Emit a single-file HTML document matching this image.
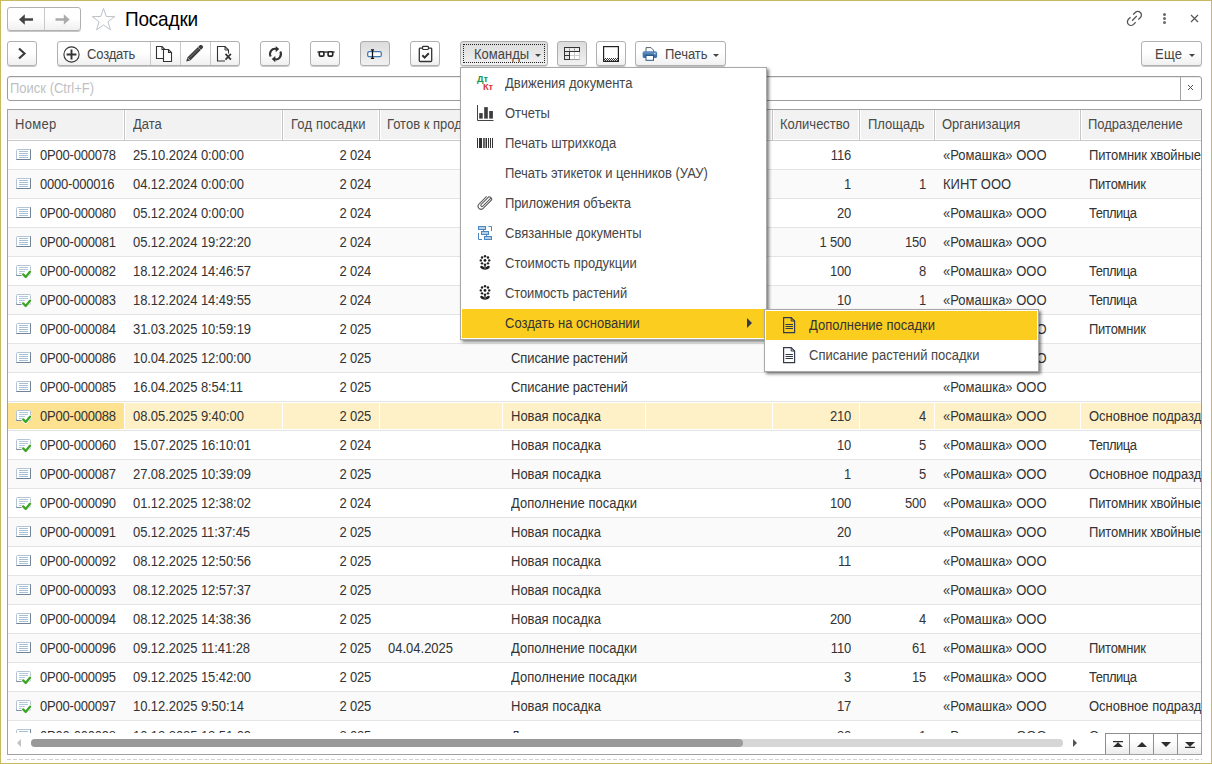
<!DOCTYPE html>
<html lang="ru">
<head>
<meta charset="utf-8">
<title>Посадки</title>
<style>
*{box-sizing:border-box;margin:0;padding:0}
html,body{width:1212px;height:764px;overflow:hidden;background:#fff}
body{font-family:"Liberation Sans",Arial,sans-serif;font-size:13px;color:#333;position:relative}
.frame{position:absolute;left:0;top:0;width:1212px;height:764px;border:1px solid #c9b95f;pointer-events:none;z-index:50}
.abs{position:absolute}
.btn{position:absolute;height:25px;border:1px solid #b0b0b0;border-radius:3px;background:linear-gradient(#fff 0%,#fff 45%,#f0f0f0 100%);box-shadow:0 1px 0 rgba(0,0,0,.22);white-space:nowrap;color:#444;font-size:13px;line-height:25px}
.btn.pressed{background:linear-gradient(#dcdcdc,#f1f1f1);border-color:#adadad;box-shadow:0 1px 0 rgba(0,0,0,.12)}
.btn svg{position:absolute}
.sep{position:absolute;top:0;width:1px;height:23px;background:#c9c9c9}
.title{position:absolute;left:125px;top:8px;font-size:19px;line-height:24px;color:#000;letter-spacing:-0.2px}
.caret{position:absolute;width:0;height:0;border-left:3.5px solid transparent;border-right:3.5px solid transparent;border-top:3.5px solid #444}
/* search */
.search{position:absolute;left:7px;top:76px;width:1195px;height:25px;border:1px solid #9c9c9c;border-radius:3px;background:#fff;box-shadow:inset 0 1px 0 rgba(0,0,0,.08)}
.search .ph{position:absolute;left:2px;top:0;line-height:23px;color:#bfbfc2;font-size:13px}
.search .clr{position:absolute;right:0;top:0;width:21px;height:23px;border-left:1px solid #a4a4a4;text-align:center;line-height:22px;color:#555;font-size:13px}
/* table */
.table{position:absolute;left:7px;top:109px;width:1195px;height:646px;border:1px solid #a0a0a0;background:#fff;overflow:hidden}
.thead{position:absolute;left:0;top:0;width:1193px;height:30px;background:#fff}
.thead .h{position:absolute;top:0;height:29px;line-height:30px;color:#4a4a4a;background:#f2f2f2;overflow:hidden;white-space:nowrap}
.thead .h span{position:absolute;top:0}
.hdiv{position:absolute;top:0;width:1px;height:30px;background:#c6c6c6}
.hline{position:absolute;left:0;top:30px;width:1193px;height:1px;background:#c9c9c9}
.tbody{position:absolute;left:0;top:0;width:1193px;height:623px;overflow:hidden}
.row{position:absolute;left:0;width:1193px;height:29px;border-bottom:1px solid #e4e4e4;background:#fff}
.row.alt{background:#fafafa}
.row .c{position:absolute;top:0;height:28px;line-height:30px;padding:0 8px;white-space:nowrap;overflow:hidden;color:#333}
.row .c.r{text-align:right;padding-right:8px;letter-spacing:-0.2px}
.row .c.first{padding-left:0}
.row .c.dt{letter-spacing:-0.07px}
.row .ri{position:absolute;left:8px;top:8px}
.row .num{position:absolute;left:32px;top:0;letter-spacing:-0.21px}
.row.sel{background:#fff}
.row.sel .c{background:#fff1c7;top:1px;height:26px;line-height:28px}
.row.sel .c.first{background:#fde292}
.row.sel .ri{top:7px}
/* vertical glyph stretch to mimic hinted rendering */
.row .tx{display:block;transform-origin:0 19px;transform:scaleY(1.08)}
.row .num{transform-origin:0 19px;transform:scaleY(1.08)}
.row.sel .tx,.row.sel .num{transform-origin:0 18px}
.row.last .tx,.row.last .num{transform:none}
.thead .h span{transform-origin:0 19px;transform:scaleY(1.08)}
.mi .t{transform-origin:0 19px;transform:scaleY(1.08)}
.btn span.abs{transform-origin:0 17px;transform:scaleY(1.08)}
.search .ph{transform-origin:0 16px;transform:scaleY(1.08)}
.title{transform-origin:0 18px;transform:scaleY(1.07)}
/* menu */
.menu{position:absolute;left:460px;top:67px;width:307px;height:273px;background:#fff;border:1px solid #a8a8a8;box-shadow:2px 2px 3px rgba(0,0,0,.5);z-index:10}
.mi{position:absolute;left:1px;margin-top:1px;width:303px;height:29px;line-height:29px;color:#464646}
.mi .t{position:absolute;left:43px;top:0}
.mi svg{position:absolute}
.mi.hl{background:#facd1f;color:#333}
.sub{position:absolute;left:764px;top:309px;width:275px;height:63px;background:#fff;border:1px solid #a8a8a8;box-shadow:2px 2px 3px rgba(0,0,0,.5);z-index:11}
.sub .mi{width:271px;left:1px;margin-top:1px}
.sub .mi .t{left:43px}
/* bottom */
.hscroll{position:absolute;left:0;top:623px;width:1193px;height:21px;background:#fff}
.navb{position:absolute;top:0;width:25px;height:22px;border:1px solid #8e8e8e;background:linear-gradient(#fff 35%,#ececec);}
.dash{position:absolute;left:7px;top:759px;width:1195px;height:1px;background:repeating-linear-gradient(90deg,#d0d0d0 0,#d0d0d0 4px,transparent 4px,transparent 6px)}
</style>
</head>
<body>
<!-- title bar -->
<div class="btn" style="left:7px;top:7px;width:74px;height:24px">
  <svg style="left:11px;top:6px" width="16" height="11" viewBox="0 0 16 11"><path d="M0 5.500L5.800 0.200V4.300H14V6.700H5.800V10.800z" fill="#444"/></svg>
  <div class="sep" style="left:36px;height:22px"></div>
  <svg style="left:46px;top:6px" width="16" height="11" viewBox="0 0 16 11"><path d="M15.600 5.500L9.800 0.200V4.300H1.500V6.700H9.800V10.800z" fill="#ababab"/></svg>
</div>
<svg class="abs" style="left:91px;top:7px" width="25" height="24" viewBox="0 0 25 24"><path d="M12.50 1.50L15.27 9.46L23.70 9.64L16.98 14.73L19.42 22.80L12.50 17.98L5.58 22.80L8.02 14.73L1.30 9.64L9.73 9.46z" fill="#fff" stroke="#b3bbc4" stroke-width="0.9" stroke-linejoin="miter"/></svg>
<div class="title">Посадки</div>
<!-- right icons -->
<svg class="abs" style="left:1125px;top:9px" width="19" height="19" viewBox="0 0 19 19"><g transform="translate(9.400 9.400) rotate(-45)" fill="none" stroke="#555" stroke-width="1.300" stroke-linecap="butt"><path d="M1.900 -3.600H4.800A3.600 3.600 0 0 1 4.800 3.600H1.900"/><path d="M-1.900 3.600H-4.800A3.600 3.600 0 0 1 -4.800 -3.600H-1.900"/><path d="M-3.300 0H3.300"/></g></svg>
<svg class="abs" style="left:1162px;top:12px" width="5" height="13" viewBox="0 0 5 13"><circle cx="2.500" cy="2.400" r="1.500" fill="#6a6a6a"/><circle cx="2.500" cy="6.500" r="1.500" fill="#6a6a6a"/><circle cx="2.500" cy="10.600" r="1.500" fill="#6a6a6a"/></svg>
<svg class="abs" style="left:1190px;top:14px" width="9" height="9" viewBox="0 0 9 9"><path d="M1 1l7 7M8 1l-7 7" stroke="#555" stroke-width="1.2" fill="none"/></svg>

<!-- toolbar -->
<div class="btn" style="left:7px;top:41px;width:30px">
  <svg style="left:9px;top:5px" width="10" height="13" viewBox="0 0 10 13"><path d="M2 1.5l5.5 5L2 11.5" fill="none" stroke="#3d3d3d" stroke-width="2.2"/></svg>
</div>
<div class="btn" style="left:57px;top:41px;width:183px">
  <svg style="left:5px;top:4px" width="17" height="17" viewBox="0 0 17 17"><circle cx="8.5" cy="8.5" r="7.6" fill="none" stroke="#333" stroke-width="1.1"/><path d="M8.5 3.6v9.8M3.6 8.5h9.8" stroke="#333" stroke-width="1.9"/></svg>
  <span class="abs" style="left:29px;top:0;letter-spacing:-0.17px">Создать</span>
  <div class="sep" style="left:92px"></div>
  <svg style="left:97px;top:3px" width="18" height="18" viewBox="0 0 18 18"><g fill="#fff" stroke="#333" stroke-width="1.1" stroke-linejoin="miter"><path d="M1.500 1.500h5.500l3 3v9h-8.500z"/><path d="M7 1.500v3h3" fill="none"/><path d="M8.500 4.500h5l3 3v9h-8z"/><path d="M13.500 4.500v3h3" fill="none"/></g></svg>
  <div class="sep" style="left:122px"></div>
  <svg style="left:127px;top:3px" width="19" height="18" viewBox="0 0 19 18"><path d="M1.200 16.600L2.300 12.500L14.500 0.400A2.100 2.100 0 0 1 17.500 3.300L5.300 15.500Z" fill="#3c3c3c"/><path d="M2.600 12.900l2.500 2.500" stroke="#ddd" stroke-width="0.800"/><path d="M13 2l3 3" stroke="#bbb" stroke-width="0.700"/><path d="M4.500 12.900L14 3.400" stroke="#8a8a8a" stroke-width="0.700"/></svg>
  <div class="sep" style="left:152px"></div>
  <svg style="left:158px;top:3px" width="18" height="18" viewBox="0 0 18 18"><path d="M12.500 8.500V5L9 1.500H1.500V16H9" fill="none" stroke="#333" stroke-width="1.100"/><path d="M9 1.500V5h3.500" fill="none" stroke="#333" stroke-width="1"/><path d="M9.500 8.800l5.400 5.800M14.900 8.800l-5.400 5.800" stroke="#333" stroke-width="1.700"/></svg>
</div>
<div class="btn" style="left:260px;top:41px;width:30px">
  <svg style="left:6px;top:3px" width="17" height="18" viewBox="0 0 17 18"><g fill="none" stroke="#333" stroke-width="2.100"><path d="M3.700 11.600A4.700 5.200 0 0 1 9.300 4.100"/><path d="M13.300 6.600A4.700 5.200 0 0 1 7.700 14.100"/></g><path d="M8.700 1l3.500 3.100-3.500 3.100z" fill="#333"/><path d="M8.300 11l-3.500 3.100 3.500 3.100z" fill="#333"/></svg>
</div>
<div class="btn" style="left:310px;top:41px;width:30px">
  <svg style="left:6px;top:8px" width="18" height="8" viewBox="0 0 18 8"><rect x="0.400" y="1.400" width="17.200" height="1.300" fill="#222"/><rect x="2.300" y="1.700" width="4.600" height="4.400" rx="1.200" fill="#fff" stroke="#222" stroke-width="1.600"/><rect x="11.100" y="1.700" width="4.600" height="4.400" rx="1.200" fill="#fff" stroke="#222" stroke-width="1.600"/></svg>
</div>
<div class="btn pressed" style="left:360px;top:41px;width:30px">
  <svg style="left:5px;top:6px" width="17" height="12" viewBox="0 0 17 12"><rect x="1.700" y="3.700" width="13.600" height="5" rx="1.500" fill="#fff" stroke="#3f78b2" stroke-width="1.300"/><path d="M4.900 1.800h3.200M6.500 1.800v8.600M4.900 10.400h3.200" stroke="#111" stroke-width="1.300" fill="none"/></svg>
</div>
<div class="btn" style="left:410px;top:41px;width:30px">
  <svg style="left:7px;top:3px" width="15" height="18" viewBox="0 0 15 18"><rect x="1.300" y="3.200" width="12.400" height="13.300" rx="0.800" fill="#fff" stroke="#333" stroke-width="1.300"/><rect x="4.600" y="1.300" width="5.800" height="3.200" rx="0.800" fill="#fff" stroke="#333" stroke-width="1.200"/><path d="M4.300 10.300l2.300 2.300 4.200-4.400" fill="none" stroke="#333" stroke-width="2"/></svg>
</div>
<div class="btn pressed" style="left:460px;top:41px;width:88px">
  <div class="abs" style="left:2px;top:2px;width:82px;height:19px;border:1px dotted #222"></div>
  <span class="abs" style="left:13px;top:0">Команды</span>
  <div class="caret" style="left:74px;top:12px"></div>
</div>
<div class="btn pressed" style="left:557px;top:41px;width:30px">
  <svg style="left:6px;top:5px" width="16" height="13" viewBox="0 0 16 13"><rect x="0" y="0" width="16" height="13" fill="#fff"/><path d="M10.500 4.500v8M5.500 8.500h10M15.500 4.500v8" stroke="#cdcdcd" stroke-width="1" fill="none"/><path d="M5.500 12.500h10" stroke="#9a9a9a" stroke-width="1" fill="none"/><rect x="0.500" y="0.500" width="15" height="4" fill="#ececec" stroke="#333" stroke-width="1"/><path d="M5.500 1.500v2M10.500 1.500v2" stroke="#8a8a8a" stroke-width="1"/><rect x="0.500" y="4.500" width="5" height="4" fill="#e4e4e4" stroke="#333" stroke-width="1"/><rect x="0.500" y="8.500" width="5" height="4" fill="#e4e4e4" stroke="#333" stroke-width="1"/></svg>
</div>
<div class="btn" style="left:596px;top:41px;width:30px">
  <svg style="left:6px;top:4px" width="17" height="17" viewBox="0 0 17 17"><defs><pattern id="chk" width="2" height="2" patternUnits="userSpaceOnUse"><rect width="1" height="1" fill="#333"/><rect x="1" y="1" width="1" height="1" fill="#333"/></pattern></defs><rect x="0.600" y="0.600" width="14.800" height="14.800" fill="#fff" stroke="#222" stroke-width="1.200"/><rect x="1" y="12" width="14" height="3" fill="url(#chk)"/></svg>
</div>
<div class="btn" style="left:635px;top:41px;width:91px">
  <svg style="left:6px;top:5px" width="16" height="14" viewBox="0 0 16 14"><path d="M4 5V0.600h5l2.500 2.500V5" fill="#fff" stroke="#55606c" stroke-width="1"/><rect x="0.700" y="4.600" width="14.400" height="6.400" rx="1.600" fill="#3f73aa"/><rect x="0.700" y="4.600" width="14.400" height="2.200" rx="1.200" fill="#5c8cc0"/><rect x="4" y="8.500" width="7.500" height="4.800" fill="#fff" stroke="#2f5582" stroke-width="1"/><rect x="12" y="6.300" width="1.600" height="1" fill="#e8f0f8"/></svg>
  <span class="abs" style="left:29px;top:0">Печать</span>
  <div class="caret" style="left:77px;top:12px"></div>
</div>
<div class="btn" style="left:1141px;top:41px;width:61px">
  <span class="abs" style="left:13px;top:0;letter-spacing:0.3px">Еще</span>
  <div class="caret" style="left:47px;top:12px"></div>
</div>

<!-- search -->
<div class="search"><span class="ph">Поиск (Ctrl+F)</span><div class="clr"><svg class="abs" style="left:6px;top:7px" width="7" height="7" viewBox="0 0 7 7"><path d="M1 1l5 5M6 1l-5 5" stroke="#4a4a4a" stroke-width="0.950" fill="none"/></svg></div></div>

<!-- table -->
<div class="table">
  <div class="tbody">
    <div class="thead">
<div class="h" style="left:0px;width:115px"><span style="left:7px;letter-spacing:0.3px">Номер</span></div>
<div class="hdiv" style="left:116px"></div>
<div class="h" style="left:118px;width:155px"><span style="left:7px;letter-spacing:0px">Дата</span></div>
<div class="hdiv" style="left:274px"></div>
<div class="h" style="left:276px;width:94px"><span style="left:7px;letter-spacing:0.17px">Год посадки</span></div>
<div class="hdiv" style="left:371px"></div>
<div class="h" style="left:373px;width:120px"><span style="left:6px;letter-spacing:0px">Готов к продаже</span></div>
<div class="hdiv" style="left:494px"></div>
<div class="h" style="left:496px;width:140px"><span style="left:7px;letter-spacing:0px">Вид операции</span></div>
<div class="hdiv" style="left:637px"></div>
<div class="h" style="left:639px;width:124px"><span style="left:7px;letter-spacing:0px">Комментарий</span></div>
<div class="hdiv" style="left:764px"></div>
<div class="h" style="left:766px;width:84px"><span style="left:6px;letter-spacing:0px">Количество</span></div>
<div class="hdiv" style="left:851px"></div>
<div class="h" style="left:853px;width:72px"><span style="left:7px;letter-spacing:0px">Площадь</span></div>
<div class="hdiv" style="left:926px"></div>
<div class="h" style="left:928px;width:143px"><span style="left:6px;letter-spacing:0px">Организация</span></div>
<div class="hdiv" style="left:1072px"></div>
<div class="h" style="left:1074px;width:120px"><span style="left:6px;letter-spacing:0px">Подразделение</span></div>
    </div>
    <div class="hline"></div>
<div class="row" style="top:31px">
<div class="c first" style="left:0px;width:116px"><svg class="ri" width="16" height="12" viewBox="0 0 16 12"><rect x="0.5" y="0.5" width="14" height="10" rx="1" fill="#fff" stroke="#b4c4d4"/><path d="M0.5 10v0.5h14v-10h-0.500" fill="none" stroke="#6f8499"/><path d="M3 2.500h9M3 4.500h9M3 6.500h9M3 8.500h9" stroke="#a9c0d4" stroke-width="1"/></svg><span class="num">0P00-000078</span></div>
<div class="c dt" style="left:117px;width:157px"><span class="tx">25.10.2024 0:00:00</span></div>
<div class="c r" style="left:275px;width:96px"><span class="tx">2 024</span></div>
<div class="c" style="left:372px;width:122px"></div>
<div class="c" style="left:495px;width:142px"></div>
<div class="c" style="left:638px;width:126px"></div>
<div class="c r" style="left:765px;width:86px"><span class="tx">116</span></div>
<div class="c r" style="left:852px;width:74px"></div>
<div class="c" style="left:927px;width:145px"><span class="tx">«Ромашка» ООО</span></div>
<div class="c" style="left:1073px;width:120px"><span class="tx" style="letter-spacing:-0.12px">Питомник хвойные</span></div>
</div>
<div class="row alt" style="top:60px">
<div class="c first" style="left:0px;width:116px"><svg class="ri" width="16" height="12" viewBox="0 0 16 12"><rect x="0.5" y="0.5" width="14" height="10" rx="1" fill="#fff" stroke="#b4c4d4"/><path d="M0.5 10v0.5h14v-10h-0.500" fill="none" stroke="#6f8499"/><path d="M3 2.500h9M3 4.500h9M3 6.500h9M3 8.500h9" stroke="#a9c0d4" stroke-width="1"/></svg><span class="num">0000-000016</span></div>
<div class="c dt" style="left:117px;width:157px"><span class="tx">04.12.2024 0:00:00</span></div>
<div class="c r" style="left:275px;width:96px"><span class="tx">2 024</span></div>
<div class="c" style="left:372px;width:122px"></div>
<div class="c" style="left:495px;width:142px"></div>
<div class="c" style="left:638px;width:126px"></div>
<div class="c r" style="left:765px;width:86px"><span class="tx">1</span></div>
<div class="c r" style="left:852px;width:74px"><span class="tx">1</span></div>
<div class="c" style="left:927px;width:145px"><span class="tx">КИНТ ООО</span></div>
<div class="c" style="left:1073px;width:120px"><span class="tx" style="letter-spacing:-0.26px">Питомник</span></div>
</div>
<div class="row" style="top:89px">
<div class="c first" style="left:0px;width:116px"><svg class="ri" width="16" height="12" viewBox="0 0 16 12"><rect x="0.5" y="0.5" width="14" height="10" rx="1" fill="#fff" stroke="#b4c4d4"/><path d="M0.5 10v0.5h14v-10h-0.500" fill="none" stroke="#6f8499"/><path d="M3 2.500h9M3 4.500h9M3 6.500h9M3 8.500h9" stroke="#a9c0d4" stroke-width="1"/></svg><span class="num">0P00-000080</span></div>
<div class="c dt" style="left:117px;width:157px"><span class="tx">05.12.2024 0:00:00</span></div>
<div class="c r" style="left:275px;width:96px"><span class="tx">2 024</span></div>
<div class="c" style="left:372px;width:122px"></div>
<div class="c" style="left:495px;width:142px"></div>
<div class="c" style="left:638px;width:126px"></div>
<div class="c r" style="left:765px;width:86px"><span class="tx">20</span></div>
<div class="c r" style="left:852px;width:74px"></div>
<div class="c" style="left:927px;width:145px"><span class="tx">«Ромашка» ООО</span></div>
<div class="c" style="left:1073px;width:120px"><span class="tx" style="letter-spacing:-0.5px">Теплица</span></div>
</div>
<div class="row alt" style="top:118px">
<div class="c first" style="left:0px;width:116px"><svg class="ri" width="16" height="12" viewBox="0 0 16 12"><rect x="0.5" y="0.5" width="14" height="10" rx="1" fill="#fff" stroke="#b4c4d4"/><path d="M0.5 10v0.5h14v-10h-0.500" fill="none" stroke="#6f8499"/><path d="M3 2.500h9M3 4.500h9M3 6.500h9M3 8.500h9" stroke="#a9c0d4" stroke-width="1"/></svg><span class="num">0P00-000081</span></div>
<div class="c dt" style="left:117px;width:157px"><span class="tx">05.12.2024 19:22:20</span></div>
<div class="c r" style="left:275px;width:96px"><span class="tx">2 024</span></div>
<div class="c" style="left:372px;width:122px"></div>
<div class="c" style="left:495px;width:142px"></div>
<div class="c" style="left:638px;width:126px"></div>
<div class="c r" style="left:765px;width:86px"><span class="tx">1 500</span></div>
<div class="c r" style="left:852px;width:74px"><span class="tx">150</span></div>
<div class="c" style="left:927px;width:145px"><span class="tx">«Ромашка» ООО</span></div>
<div class="c" style="left:1073px;width:120px"></div>
</div>
<div class="row" style="top:147px">
<div class="c first" style="left:0px;width:116px"><svg class="ri" width="17" height="14" viewBox="0 0 17 14"><rect x="0.5" y="0.5" width="14" height="10" rx="1" fill="#fff" stroke="#b4c4d4"/><path d="M0.5 9.500v1h7" fill="none" stroke="#7a8fa6"/><path d="M3 2.500h9M3 4.500h9M3 6.500h6M3 8.500h3" stroke="#b3c8da" stroke-width="1"/><path d="M6.500 8.500l10 0v5h-10z" fill="#fff" opacity="0"/><path d="M7.200 9.400l2.500 2.600 4.300-5.300" fill="none" stroke="#fff" stroke-width="3.600" stroke-linecap="round" stroke-linejoin="round"/><path d="M7.200 9.400l2.500 2.600 4.300-5.300" fill="none" stroke="#3da526" stroke-width="2.300" stroke-linecap="round" stroke-linejoin="round"/></svg><span class="num">0P00-000082</span></div>
<div class="c dt" style="left:117px;width:157px"><span class="tx">18.12.2024 14:46:57</span></div>
<div class="c r" style="left:275px;width:96px"><span class="tx">2 024</span></div>
<div class="c" style="left:372px;width:122px"></div>
<div class="c" style="left:495px;width:142px"></div>
<div class="c" style="left:638px;width:126px"></div>
<div class="c r" style="left:765px;width:86px"><span class="tx">100</span></div>
<div class="c r" style="left:852px;width:74px"><span class="tx">8</span></div>
<div class="c" style="left:927px;width:145px"><span class="tx">«Ромашка» ООО</span></div>
<div class="c" style="left:1073px;width:120px"><span class="tx" style="letter-spacing:-0.5px">Теплица</span></div>
</div>
<div class="row alt" style="top:176px">
<div class="c first" style="left:0px;width:116px"><svg class="ri" width="17" height="14" viewBox="0 0 17 14"><rect x="0.5" y="0.5" width="14" height="10" rx="1" fill="#fff" stroke="#b4c4d4"/><path d="M0.5 9.500v1h7" fill="none" stroke="#7a8fa6"/><path d="M3 2.500h9M3 4.500h9M3 6.500h6M3 8.500h3" stroke="#b3c8da" stroke-width="1"/><path d="M6.500 8.500l10 0v5h-10z" fill="#fff" opacity="0"/><path d="M7.200 9.400l2.500 2.600 4.300-5.300" fill="none" stroke="#fff" stroke-width="3.600" stroke-linecap="round" stroke-linejoin="round"/><path d="M7.200 9.400l2.500 2.600 4.300-5.300" fill="none" stroke="#3da526" stroke-width="2.300" stroke-linecap="round" stroke-linejoin="round"/></svg><span class="num">0P00-000083</span></div>
<div class="c dt" style="left:117px;width:157px"><span class="tx">18.12.2024 14:49:55</span></div>
<div class="c r" style="left:275px;width:96px"><span class="tx">2 024</span></div>
<div class="c" style="left:372px;width:122px"></div>
<div class="c" style="left:495px;width:142px"></div>
<div class="c" style="left:638px;width:126px"></div>
<div class="c r" style="left:765px;width:86px"><span class="tx">10</span></div>
<div class="c r" style="left:852px;width:74px"><span class="tx">1</span></div>
<div class="c" style="left:927px;width:145px"><span class="tx">«Ромашка» ООО</span></div>
<div class="c" style="left:1073px;width:120px"><span class="tx" style="letter-spacing:-0.5px">Теплица</span></div>
</div>
<div class="row" style="top:205px">
<div class="c first" style="left:0px;width:116px"><svg class="ri" width="16" height="12" viewBox="0 0 16 12"><rect x="0.5" y="0.5" width="14" height="10" rx="1" fill="#fff" stroke="#b4c4d4"/><path d="M0.5 10v0.5h14v-10h-0.500" fill="none" stroke="#6f8499"/><path d="M3 2.500h9M3 4.500h9M3 6.500h9M3 8.500h9" stroke="#a9c0d4" stroke-width="1"/></svg><span class="num">0P00-000084</span></div>
<div class="c dt" style="left:117px;width:157px"><span class="tx">31.03.2025 10:59:19</span></div>
<div class="c r" style="left:275px;width:96px"><span class="tx">2 025</span></div>
<div class="c" style="left:372px;width:122px"></div>
<div class="c" style="left:495px;width:142px"><span class="tx">Новая посадка</span></div>
<div class="c" style="left:638px;width:126px"></div>
<div class="c r" style="left:765px;width:86px"><span class="tx">50</span></div>
<div class="c r" style="left:852px;width:74px"><span class="tx">2</span></div>
<div class="c" style="left:927px;width:145px"><span class="tx">«Ромашка» ООО</span></div>
<div class="c" style="left:1073px;width:120px"><span class="tx" style="letter-spacing:-0.26px">Питомник</span></div>
</div>
<div class="row alt" style="top:234px">
<div class="c first" style="left:0px;width:116px"><svg class="ri" width="16" height="12" viewBox="0 0 16 12"><rect x="0.5" y="0.5" width="14" height="10" rx="1" fill="#fff" stroke="#b4c4d4"/><path d="M0.5 10v0.5h14v-10h-0.500" fill="none" stroke="#6f8499"/><path d="M3 2.500h9M3 4.500h9M3 6.500h9M3 8.500h9" stroke="#a9c0d4" stroke-width="1"/></svg><span class="num">0P00-000086</span></div>
<div class="c dt" style="left:117px;width:157px"><span class="tx">10.04.2025 12:00:00</span></div>
<div class="c r" style="left:275px;width:96px"><span class="tx">2 025</span></div>
<div class="c" style="left:372px;width:122px"></div>
<div class="c" style="left:495px;width:142px"><span class="tx" style="letter-spacing:-0.1px">Списание растений</span></div>
<div class="c" style="left:638px;width:126px"></div>
<div class="c r" style="left:765px;width:86px"></div>
<div class="c r" style="left:852px;width:74px"></div>
<div class="c" style="left:927px;width:145px"><span class="tx">«Ромашка» ООО</span></div>
<div class="c" style="left:1073px;width:120px"></div>
</div>
<div class="row" style="top:263px">
<div class="c first" style="left:0px;width:116px"><svg class="ri" width="16" height="12" viewBox="0 0 16 12"><rect x="0.5" y="0.5" width="14" height="10" rx="1" fill="#fff" stroke="#b4c4d4"/><path d="M0.5 10v0.5h14v-10h-0.500" fill="none" stroke="#6f8499"/><path d="M3 2.500h9M3 4.500h9M3 6.500h9M3 8.500h9" stroke="#a9c0d4" stroke-width="1"/></svg><span class="num">0P00-000085</span></div>
<div class="c dt" style="left:117px;width:157px"><span class="tx">16.04.2025 8:54:11</span></div>
<div class="c r" style="left:275px;width:96px"><span class="tx">2 025</span></div>
<div class="c" style="left:372px;width:122px"></div>
<div class="c" style="left:495px;width:142px"><span class="tx" style="letter-spacing:-0.1px">Списание растений</span></div>
<div class="c" style="left:638px;width:126px"></div>
<div class="c r" style="left:765px;width:86px"></div>
<div class="c r" style="left:852px;width:74px"></div>
<div class="c" style="left:927px;width:145px"><span class="tx">«Ромашка» ООО</span></div>
<div class="c" style="left:1073px;width:120px"></div>
</div>
<div class="row alt sel" style="top:292px">
<div class="c first" style="left:0px;width:116px"><svg class="ri" width="17" height="14" viewBox="0 0 17 14"><rect x="0.5" y="0.5" width="14" height="10" rx="1" fill="#fff" stroke="#b4c4d4"/><path d="M0.5 9.500v1h7" fill="none" stroke="#7a8fa6"/><path d="M3 2.500h9M3 4.500h9M3 6.500h6M3 8.500h3" stroke="#b3c8da" stroke-width="1"/><path d="M6.500 8.500l10 0v5h-10z" fill="#fff" opacity="0"/><path d="M7.200 9.400l2.500 2.600 4.300-5.300" fill="none" stroke="#fff" stroke-width="3.600" stroke-linecap="round" stroke-linejoin="round"/><path d="M7.200 9.400l2.500 2.600 4.300-5.300" fill="none" stroke="#3da526" stroke-width="2.300" stroke-linecap="round" stroke-linejoin="round"/></svg><span class="num">0P00-000088</span></div>
<div class="c dt" style="left:117px;width:157px"><span class="tx">08.05.2025 9:40:00</span></div>
<div class="c r" style="left:275px;width:96px"><span class="tx">2 025</span></div>
<div class="c" style="left:372px;width:122px"></div>
<div class="c" style="left:495px;width:142px"><span class="tx">Новая посадка</span></div>
<div class="c" style="left:638px;width:126px"></div>
<div class="c r" style="left:765px;width:86px"><span class="tx">210</span></div>
<div class="c r" style="left:852px;width:74px"><span class="tx">4</span></div>
<div class="c" style="left:927px;width:145px"><span class="tx">«Ромашка» ООО</span></div>
<div class="c" style="left:1073px;width:120px"><span class="tx">Основное подразделение</span></div>
</div>
<div class="row" style="top:321px">
<div class="c first" style="left:0px;width:116px"><svg class="ri" width="17" height="14" viewBox="0 0 17 14"><rect x="0.5" y="0.5" width="14" height="10" rx="1" fill="#fff" stroke="#b4c4d4"/><path d="M0.5 9.500v1h7" fill="none" stroke="#7a8fa6"/><path d="M3 2.500h9M3 4.500h9M3 6.500h6M3 8.500h3" stroke="#b3c8da" stroke-width="1"/><path d="M6.500 8.500l10 0v5h-10z" fill="#fff" opacity="0"/><path d="M7.200 9.400l2.500 2.600 4.300-5.300" fill="none" stroke="#fff" stroke-width="3.600" stroke-linecap="round" stroke-linejoin="round"/><path d="M7.200 9.400l2.500 2.600 4.300-5.300" fill="none" stroke="#3da526" stroke-width="2.300" stroke-linecap="round" stroke-linejoin="round"/></svg><span class="num">0P00-000060</span></div>
<div class="c dt" style="left:117px;width:157px"><span class="tx">15.07.2025 16:10:01</span></div>
<div class="c r" style="left:275px;width:96px"><span class="tx">2 024</span></div>
<div class="c" style="left:372px;width:122px"></div>
<div class="c" style="left:495px;width:142px"><span class="tx">Новая посадка</span></div>
<div class="c" style="left:638px;width:126px"></div>
<div class="c r" style="left:765px;width:86px"><span class="tx">10</span></div>
<div class="c r" style="left:852px;width:74px"><span class="tx">5</span></div>
<div class="c" style="left:927px;width:145px"><span class="tx">«Ромашка» ООО</span></div>
<div class="c" style="left:1073px;width:120px"><span class="tx" style="letter-spacing:-0.5px">Теплица</span></div>
</div>
<div class="row alt" style="top:350px">
<div class="c first" style="left:0px;width:116px"><svg class="ri" width="16" height="12" viewBox="0 0 16 12"><rect x="0.5" y="0.5" width="14" height="10" rx="1" fill="#fff" stroke="#b4c4d4"/><path d="M0.5 10v0.5h14v-10h-0.500" fill="none" stroke="#6f8499"/><path d="M3 2.500h9M3 4.500h9M3 6.500h9M3 8.500h9" stroke="#a9c0d4" stroke-width="1"/></svg><span class="num">0P00-000087</span></div>
<div class="c dt" style="left:117px;width:157px"><span class="tx">27.08.2025 10:39:09</span></div>
<div class="c r" style="left:275px;width:96px"><span class="tx">2 025</span></div>
<div class="c" style="left:372px;width:122px"></div>
<div class="c" style="left:495px;width:142px"><span class="tx">Новая посадка</span></div>
<div class="c" style="left:638px;width:126px"></div>
<div class="c r" style="left:765px;width:86px"><span class="tx">1</span></div>
<div class="c r" style="left:852px;width:74px"><span class="tx">5</span></div>
<div class="c" style="left:927px;width:145px"><span class="tx">«Ромашка» ООО</span></div>
<div class="c" style="left:1073px;width:120px"><span class="tx">Основное подразделение</span></div>
</div>
<div class="row" style="top:379px">
<div class="c first" style="left:0px;width:116px"><svg class="ri" width="17" height="14" viewBox="0 0 17 14"><rect x="0.5" y="0.5" width="14" height="10" rx="1" fill="#fff" stroke="#b4c4d4"/><path d="M0.5 9.500v1h7" fill="none" stroke="#7a8fa6"/><path d="M3 2.500h9M3 4.500h9M3 6.500h6M3 8.500h3" stroke="#b3c8da" stroke-width="1"/><path d="M6.500 8.500l10 0v5h-10z" fill="#fff" opacity="0"/><path d="M7.200 9.400l2.500 2.600 4.300-5.300" fill="none" stroke="#fff" stroke-width="3.600" stroke-linecap="round" stroke-linejoin="round"/><path d="M7.200 9.400l2.500 2.600 4.300-5.300" fill="none" stroke="#3da526" stroke-width="2.300" stroke-linecap="round" stroke-linejoin="round"/></svg><span class="num">0P00-000090</span></div>
<div class="c dt" style="left:117px;width:157px"><span class="tx">01.12.2025 12:38:02</span></div>
<div class="c r" style="left:275px;width:96px"><span class="tx">2 024</span></div>
<div class="c" style="left:372px;width:122px"></div>
<div class="c" style="left:495px;width:142px"><span class="tx">Дополнение посадки</span></div>
<div class="c" style="left:638px;width:126px"></div>
<div class="c r" style="left:765px;width:86px"><span class="tx">100</span></div>
<div class="c r" style="left:852px;width:74px"><span class="tx">500</span></div>
<div class="c" style="left:927px;width:145px"><span class="tx">«Ромашка» ООО</span></div>
<div class="c" style="left:1073px;width:120px"><span class="tx" style="letter-spacing:-0.12px">Питомник хвойные</span></div>
</div>
<div class="row alt" style="top:408px">
<div class="c first" style="left:0px;width:116px"><svg class="ri" width="16" height="12" viewBox="0 0 16 12"><rect x="0.5" y="0.5" width="14" height="10" rx="1" fill="#fff" stroke="#b4c4d4"/><path d="M0.5 10v0.5h14v-10h-0.500" fill="none" stroke="#6f8499"/><path d="M3 2.500h9M3 4.500h9M3 6.500h9M3 8.500h9" stroke="#a9c0d4" stroke-width="1"/></svg><span class="num">0P00-000091</span></div>
<div class="c dt" style="left:117px;width:157px"><span class="tx">05.12.2025 11:37:45</span></div>
<div class="c r" style="left:275px;width:96px"><span class="tx">2 025</span></div>
<div class="c" style="left:372px;width:122px"></div>
<div class="c" style="left:495px;width:142px"><span class="tx">Новая посадка</span></div>
<div class="c" style="left:638px;width:126px"></div>
<div class="c r" style="left:765px;width:86px"><span class="tx">20</span></div>
<div class="c r" style="left:852px;width:74px"></div>
<div class="c" style="left:927px;width:145px"><span class="tx">«Ромашка» ООО</span></div>
<div class="c" style="left:1073px;width:120px"><span class="tx" style="letter-spacing:-0.12px">Питомник хвойные</span></div>
</div>
<div class="row" style="top:437px">
<div class="c first" style="left:0px;width:116px"><svg class="ri" width="16" height="12" viewBox="0 0 16 12"><rect x="0.5" y="0.5" width="14" height="10" rx="1" fill="#fff" stroke="#b4c4d4"/><path d="M0.5 10v0.5h14v-10h-0.500" fill="none" stroke="#6f8499"/><path d="M3 2.500h9M3 4.500h9M3 6.500h9M3 8.500h9" stroke="#a9c0d4" stroke-width="1"/></svg><span class="num">0P00-000092</span></div>
<div class="c dt" style="left:117px;width:157px"><span class="tx">08.12.2025 12:50:56</span></div>
<div class="c r" style="left:275px;width:96px"><span class="tx">2 025</span></div>
<div class="c" style="left:372px;width:122px"></div>
<div class="c" style="left:495px;width:142px"><span class="tx">Новая посадка</span></div>
<div class="c" style="left:638px;width:126px"></div>
<div class="c r" style="left:765px;width:86px"><span class="tx">11</span></div>
<div class="c r" style="left:852px;width:74px"></div>
<div class="c" style="left:927px;width:145px"><span class="tx">«Ромашка» ООО</span></div>
<div class="c" style="left:1073px;width:120px"></div>
</div>
<div class="row alt" style="top:466px">
<div class="c first" style="left:0px;width:116px"><svg class="ri" width="16" height="12" viewBox="0 0 16 12"><rect x="0.5" y="0.5" width="14" height="10" rx="1" fill="#fff" stroke="#b4c4d4"/><path d="M0.5 10v0.5h14v-10h-0.500" fill="none" stroke="#6f8499"/><path d="M3 2.500h9M3 4.500h9M3 6.500h9M3 8.500h9" stroke="#a9c0d4" stroke-width="1"/></svg><span class="num">0P00-000093</span></div>
<div class="c dt" style="left:117px;width:157px"><span class="tx">08.12.2025 12:57:37</span></div>
<div class="c r" style="left:275px;width:96px"><span class="tx">2 025</span></div>
<div class="c" style="left:372px;width:122px"></div>
<div class="c" style="left:495px;width:142px"><span class="tx">Новая посадка</span></div>
<div class="c" style="left:638px;width:126px"></div>
<div class="c r" style="left:765px;width:86px"></div>
<div class="c r" style="left:852px;width:74px"></div>
<div class="c" style="left:927px;width:145px"><span class="tx">«Ромашка» ООО</span></div>
<div class="c" style="left:1073px;width:120px"></div>
</div>
<div class="row" style="top:495px">
<div class="c first" style="left:0px;width:116px"><svg class="ri" width="16" height="12" viewBox="0 0 16 12"><rect x="0.5" y="0.5" width="14" height="10" rx="1" fill="#fff" stroke="#b4c4d4"/><path d="M0.5 10v0.5h14v-10h-0.500" fill="none" stroke="#6f8499"/><path d="M3 2.500h9M3 4.500h9M3 6.500h9M3 8.500h9" stroke="#a9c0d4" stroke-width="1"/></svg><span class="num">0P00-000094</span></div>
<div class="c dt" style="left:117px;width:157px"><span class="tx">08.12.2025 14:38:36</span></div>
<div class="c r" style="left:275px;width:96px"><span class="tx">2 025</span></div>
<div class="c" style="left:372px;width:122px"></div>
<div class="c" style="left:495px;width:142px"><span class="tx">Новая посадка</span></div>
<div class="c" style="left:638px;width:126px"></div>
<div class="c r" style="left:765px;width:86px"><span class="tx">200</span></div>
<div class="c r" style="left:852px;width:74px"><span class="tx">4</span></div>
<div class="c" style="left:927px;width:145px"><span class="tx">«Ромашка» ООО</span></div>
<div class="c" style="left:1073px;width:120px"></div>
</div>
<div class="row alt" style="top:524px">
<div class="c first" style="left:0px;width:116px"><svg class="ri" width="16" height="12" viewBox="0 0 16 12"><rect x="0.5" y="0.5" width="14" height="10" rx="1" fill="#fff" stroke="#b4c4d4"/><path d="M0.5 10v0.5h14v-10h-0.500" fill="none" stroke="#6f8499"/><path d="M3 2.500h9M3 4.500h9M3 6.500h9M3 8.500h9" stroke="#a9c0d4" stroke-width="1"/></svg><span class="num">0P00-000096</span></div>
<div class="c dt" style="left:117px;width:157px"><span class="tx">09.12.2025 11:41:28</span></div>
<div class="c r" style="left:275px;width:96px"><span class="tx">2 025</span></div>
<div class="c" style="left:372px;width:122px"><span class="tx">04.04.2025</span></div>
<div class="c" style="left:495px;width:142px"><span class="tx">Дополнение посадки</span></div>
<div class="c" style="left:638px;width:126px"></div>
<div class="c r" style="left:765px;width:86px"><span class="tx">110</span></div>
<div class="c r" style="left:852px;width:74px"><span class="tx">61</span></div>
<div class="c" style="left:927px;width:145px"><span class="tx">«Ромашка» ООО</span></div>
<div class="c" style="left:1073px;width:120px"><span class="tx" style="letter-spacing:-0.26px">Питомник</span></div>
</div>
<div class="row" style="top:553px">
<div class="c first" style="left:0px;width:116px"><svg class="ri" width="17" height="14" viewBox="0 0 17 14"><rect x="0.5" y="0.5" width="14" height="10" rx="1" fill="#fff" stroke="#b4c4d4"/><path d="M0.5 9.500v1h7" fill="none" stroke="#7a8fa6"/><path d="M3 2.500h9M3 4.500h9M3 6.500h6M3 8.500h3" stroke="#b3c8da" stroke-width="1"/><path d="M6.500 8.500l10 0v5h-10z" fill="#fff" opacity="0"/><path d="M7.200 9.400l2.500 2.600 4.300-5.300" fill="none" stroke="#fff" stroke-width="3.600" stroke-linecap="round" stroke-linejoin="round"/><path d="M7.200 9.400l2.500 2.600 4.300-5.300" fill="none" stroke="#3da526" stroke-width="2.300" stroke-linecap="round" stroke-linejoin="round"/></svg><span class="num">0P00-000095</span></div>
<div class="c dt" style="left:117px;width:157px"><span class="tx">09.12.2025 15:42:00</span></div>
<div class="c r" style="left:275px;width:96px"><span class="tx">2 025</span></div>
<div class="c" style="left:372px;width:122px"></div>
<div class="c" style="left:495px;width:142px"><span class="tx">Дополнение посадки</span></div>
<div class="c" style="left:638px;width:126px"></div>
<div class="c r" style="left:765px;width:86px"><span class="tx">3</span></div>
<div class="c r" style="left:852px;width:74px"><span class="tx">15</span></div>
<div class="c" style="left:927px;width:145px"><span class="tx">«Ромашка» ООО</span></div>
<div class="c" style="left:1073px;width:120px"><span class="tx" style="letter-spacing:-0.5px">Теплица</span></div>
</div>
<div class="row alt" style="top:582px">
<div class="c first" style="left:0px;width:116px"><svg class="ri" width="17" height="14" viewBox="0 0 17 14"><rect x="0.5" y="0.5" width="14" height="10" rx="1" fill="#fff" stroke="#b4c4d4"/><path d="M0.5 9.500v1h7" fill="none" stroke="#7a8fa6"/><path d="M3 2.500h9M3 4.500h9M3 6.500h6M3 8.500h3" stroke="#b3c8da" stroke-width="1"/><path d="M6.500 8.500l10 0v5h-10z" fill="#fff" opacity="0"/><path d="M7.200 9.400l2.500 2.600 4.300-5.300" fill="none" stroke="#fff" stroke-width="3.600" stroke-linecap="round" stroke-linejoin="round"/><path d="M7.200 9.400l2.500 2.600 4.300-5.300" fill="none" stroke="#3da526" stroke-width="2.300" stroke-linecap="round" stroke-linejoin="round"/></svg><span class="num">0P00-000097</span></div>
<div class="c dt" style="left:117px;width:157px"><span class="tx">10.12.2025 9:50:14</span></div>
<div class="c r" style="left:275px;width:96px"><span class="tx">2 025</span></div>
<div class="c" style="left:372px;width:122px"></div>
<div class="c" style="left:495px;width:142px"><span class="tx">Новая посадка</span></div>
<div class="c" style="left:638px;width:126px"></div>
<div class="c r" style="left:765px;width:86px"><span class="tx">17</span></div>
<div class="c r" style="left:852px;width:74px"></div>
<div class="c" style="left:927px;width:145px"><span class="tx">«Ромашка» ООО</span></div>
<div class="c" style="left:1073px;width:120px"><span class="tx">Основное подразделение</span></div>
</div>
<div class="row last" style="top:611px">
<div class="c first" style="left:0px;width:116px"><svg class="ri" width="16" height="12" viewBox="0 0 16 12"><rect x="0.5" y="0.5" width="14" height="10" rx="1" fill="#fff" stroke="#b4c4d4"/><path d="M0.5 10v0.5h14v-10h-0.500" fill="none" stroke="#6f8499"/><path d="M3 2.500h9M3 4.500h9M3 6.500h9M3 8.500h9" stroke="#a9c0d4" stroke-width="1"/></svg><span class="num">0P00-000098</span></div>
<div class="c dt" style="left:117px;width:157px"><span class="tx">10.12.2025 12:51:09</span></div>
<div class="c r" style="left:275px;width:96px"><span class="tx">2 025</span></div>
<div class="c" style="left:372px;width:122px"></div>
<div class="c" style="left:495px;width:142px"><span class="tx">Дополнение посадки</span></div>
<div class="c" style="left:638px;width:126px"></div>
<div class="c r" style="left:765px;width:86px"><span class="tx">30</span></div>
<div class="c r" style="left:852px;width:74px"><span class="tx">1</span></div>
<div class="c" style="left:927px;width:145px"><span class="tx">«Ромашка» ООО</span></div>
<div class="c" style="left:1073px;width:120px"><span class="tx">Основное подразделение</span></div>
</div>
  </div>
  <div class="hscroll">
    <div class="abs" style="left:9px;top:6px;width:0;height:0;border-top:4px solid transparent;border-bottom:4px solid transparent;border-right:4px solid #c2c2c2"></div>
    <div class="abs" style="left:23px;top:6px;width:1032px;height:8px;border-radius:4px;background:#d6d6d6"></div>
    <div class="abs" style="left:23px;top:6px;width:712px;height:8px;border-radius:4px;background:#999"></div>
    <div class="abs" style="left:1065px;top:6px;width:0;height:0;border-top:4px solid transparent;border-bottom:4px solid transparent;border-left:4px solid #555"></div>
    <div class="navb" style="left:1097px"><svg class="abs" style="left:7px;top:7px" width="10" height="6" viewBox="0 0 10 6"><path d="M0 0h10v1.300H0zM5 1.300L10 6H0z" fill="#2e2e2e"/></svg></div>
    <div class="navb" style="left:1121px"><svg class="abs" style="left:7px;top:8px" width="10" height="5" viewBox="0 0 10 5"><path d="M5 0l5 5H0z" fill="#2e2e2e"/></svg></div>
    <div class="navb" style="left:1145px"><svg class="abs" style="left:7px;top:8px" width="10" height="5" viewBox="0 0 10 5"><path d="M5 5l5-5H0z" fill="#2e2e2e"/></svg></div>
    <div class="navb" style="left:1169px"><svg class="abs" style="left:7px;top:8px" width="10" height="6" viewBox="0 0 10 6"><path d="M0 4.700h10V6H0zM5 4.700L10 0H0z" fill="#2e2e2e"/></svg></div>
  </div>
</div>
<div class="dash"></div>

<!-- dropdown menu -->
<div class="menu">
  <div class="mi" style="top:0"><svg style="left:14px;top:6px" width="20" height="18" viewBox="0 0 20 18"><text x="0.900" y="7" font-family="Liberation Sans, sans-serif" font-size="8.600" font-weight="bold" fill="#0f9648" textLength="11" lengthAdjust="spacingAndGlyphs">Дт</text><text x="6.900" y="15" font-family="Liberation Sans, sans-serif" font-size="8.600" font-weight="bold" fill="#db373f" textLength="10.300" lengthAdjust="spacingAndGlyphs">Кт</text></svg><span class="t">Движения документа</span></div>
  <div class="mi" style="top:30px"><svg style="left:15px;top:6px" width="17" height="16" viewBox="0 0 17 16"><path d="M0.500 0v15.500H16.500" fill="none" stroke="#444" stroke-width="1"/><rect x="2.200" y="8.100" width="3.500" height="5.500" fill="#3d3d3d"/><rect x="7.200" y="2.100" width="3.600" height="11.500" fill="#3d3d3d"/><rect x="12.200" y="6" width="3.700" height="7.600" fill="#3d3d3d"/></svg><span class="t">Отчеты</span></div>
  <div class="mi" style="top:60px"><svg style="left:14px;top:9px" width="18" height="10" viewBox="0 0 18 10"><path d="M1 0h1v10h-1zM3 0h3v10h-3zM7.200 0h1.500v10h-1.500zM9.500 0h1.500v10h-1.500zM12 0h1v10h-1zM14 0h1v10h-1zM16 0h1v10h-1z" fill="#333"/></svg><span class="t">Печать штрихкода</span></div>
  <div class="mi" style="top:90px"><span class="t" style="letter-spacing:-0.03px">Печать этикеток и ценников (УАУ)</span></div>
  <div class="mi" style="top:120px"><svg style="left:14px;top:5px" width="18" height="18" viewBox="0 0 18 18"><g transform="translate(9.400 7.900) rotate(-45) scale(0.930) translate(-9.800 -3.200)" fill="none" stroke="#5c5c5c" stroke-width="1.100" stroke-linecap="round"><path d="M16.400 4.500H4.600A1.300 1.300 0 0 1 4.600 1.900H16.300A3.200 3.200 0 0 1 16.300 6.400H3.200A3.200 3.200 0 0 1 3.200 0H14.500" transform="translate(0 0)"/></g></svg><span class="t" style="letter-spacing:-0.13px">Приложения объекта</span></div>
  <div class="mi" style="top:150px"><svg style="left:15px;top:6px" width="16" height="16" viewBox="0 0 16 16"><path d="M11.500 1.500H14.500V6M1.500 8V14.500H5M6.500 4.500V6.500M9.500 9.500V11.500" fill="none" stroke="#4a86c0" stroke-width="1"/><g fill="#b5cfe8" stroke="#4a86c0" stroke-width="1"><rect x="1.500" y="1.500" width="7" height="3"/><rect x="4.500" y="6.500" width="7" height="3"/><rect x="7.500" y="11.500" width="7" height="3"/></g></svg><span class="t">Связанные документы</span></div>
  <div class="mi" style="top:180px"><svg style="left:17px;top:6px" width="13" height="16" viewBox="0 0 13 16"><g fill="#1e1e1e"><circle cx="6.00" cy="1.20" r="1.2"/><circle cx="8.97" cy="2.43" r="1.2"/><circle cx="10.20" cy="5.40" r="1.2"/><circle cx="8.97" cy="8.37" r="1.2"/><circle cx="6.00" cy="9.60" r="1.2"/><circle cx="3.03" cy="8.37" r="1.2"/><circle cx="1.80" cy="5.40" r="1.2"/><circle cx="3.03" cy="2.43" r="1.2"/><circle cx="6" cy="5.400" r="1.400"/><rect x="5.400" y="10" width="1.200" height="5"/><ellipse cx="3.400" cy="12.600" rx="2.500" ry="1.400" transform="rotate(35 3.400 12.600)"/><ellipse cx="8.600" cy="12.600" rx="2.500" ry="1.400" transform="rotate(-35 8.600 12.600)"/></g></svg><span class="t">Стоимость продукции</span></div>
  <div class="mi" style="top:210px"><svg style="left:17px;top:6px" width="13" height="16" viewBox="0 0 13 16"><g fill="#1e1e1e"><circle cx="6.00" cy="1.20" r="1.2"/><circle cx="8.97" cy="2.43" r="1.2"/><circle cx="10.20" cy="5.40" r="1.2"/><circle cx="8.97" cy="8.37" r="1.2"/><circle cx="6.00" cy="9.60" r="1.2"/><circle cx="3.03" cy="8.37" r="1.2"/><circle cx="1.80" cy="5.40" r="1.2"/><circle cx="3.03" cy="2.43" r="1.2"/><circle cx="6" cy="5.400" r="1.400"/><rect x="5.400" y="10" width="1.200" height="5"/><ellipse cx="3.400" cy="12.600" rx="2.500" ry="1.400" transform="rotate(35 3.400 12.600)"/><ellipse cx="8.600" cy="12.600" rx="2.500" ry="1.400" transform="rotate(-35 8.600 12.600)"/></g></svg><span class="t" style="letter-spacing:-0.13px">Стоимость растений</span></div>
  <div class="mi hl" style="top:240px"><span class="t">Создать на основании</span><div class="abs" style="left:285px;top:9px;width:0;height:0;border-top:5px solid transparent;border-bottom:5px solid transparent;border-left:5px solid #333a48"></div></div>
</div>
<div class="sub">
  <div class="mi hl" style="top:0"><svg style="left:17px;top:6px" width="13" height="17" viewBox="0 0 13 17"><path d="M0.600 0.600h7.600l3.400 3.400v11.600H0.600z" fill="none" stroke="#333a48" stroke-width="1.200"/><path d="M8.200 0.600v3.400h3.400" fill="none" stroke="#333a48" stroke-width="1"/><path d="M2.500 7.500h7.500M2.500 9.500h7.500M2.500 11.500h7.500" stroke="#333a48" stroke-width="1"/></svg><span class="t">Дополнение посадки</span></div>
  <div class="mi" style="top:30px"><svg style="left:17px;top:6px" width="13" height="17" viewBox="0 0 13 17"><path d="M0.600 0.600h7.600l3.400 3.400v11.600H0.600z" fill="none" stroke="#333a48" stroke-width="1.200"/><path d="M8.200 0.600v3.400h3.400" fill="none" stroke="#333a48" stroke-width="1"/><path d="M2.500 7.500h7.500M2.500 9.500h7.500M2.500 11.500h7.500" stroke="#333a48" stroke-width="1"/></svg><span class="t">Списание растений посадки</span></div>
</div>
<div class="frame"></div>
</body>
</html>
